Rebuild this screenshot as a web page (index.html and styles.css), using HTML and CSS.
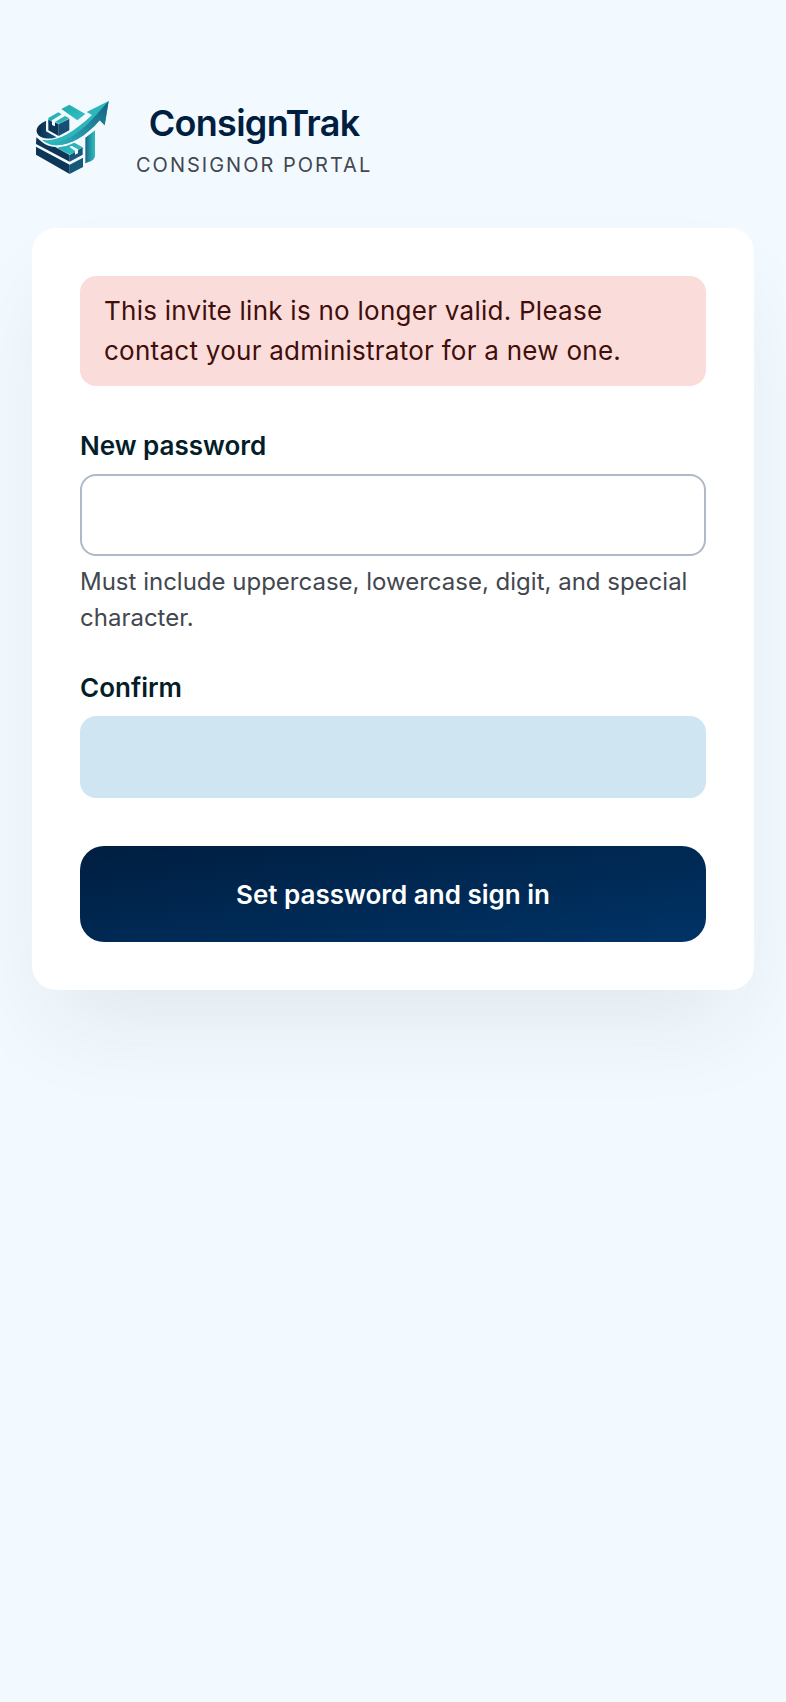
FILE: index.html
```html
<!DOCTYPE html>
<html lang="en">
<head>
    <meta charset="UTF-8">
    <meta name="viewport" content="width=device-width, initial-scale=1.0">
    <title>ConsignTrak - Consignor Portal</title>
    <link rel="stylesheet" href="styles.css">
</head>
<body>
    <main class="page">
        <header class="brand">
            <svg class="brand-logo" viewBox="24 24 240 240" aria-hidden="true">
                <defs>
                    <linearGradient id="arrow" x1="0" y1="1" x2="1" y2="0">
                        <stop offset="0" stop-color="#2cb9bd"/>
                        <stop offset="0.45" stop-color="#258fa3"/>
                        <stop offset="1" stop-color="#17617f"/>
                    </linearGradient>
                    <linearGradient id="teal" x1="0" y1="0" x2="1" y2="1">
                        <stop offset="0" stop-color="#20a6ad"/>
                        <stop offset="1" stop-color="#36c3c4"/>
                    </linearGradient>
                    <linearGradient id="side" x1="0" y1="0" x2="1" y2="0">
                        <stop offset="0" stop-color="#1a6684"/>
                        <stop offset="0.4" stop-color="#228fa2"/>
                        <stop offset="1" stop-color="#35bbbe"/>
                    </linearGradient>
                    <linearGradient id="navy" x1="0" y1="0" x2="1" y2="0">
                        <stop offset="0" stop-color="#0b2a4b"/>
                        <stop offset="1" stop-color="#17577a"/>
                    </linearGradient>
                </defs>
                <!-- back of the ring -->
                <path fill="url(#navy)" d="M66 92V124L98 142C84 147 65 147 51 141C30 129 33 106 66 92Z"/>
                <!-- small parcel -->
                <path fill="url(#teal)" d="M73 84L103 67L113 73L84 91V104L73 98Z"/>
                <path fill="url(#teal)" d="M94 95L123 78L136 85L105 102Z"/>
                <path fill="#0d3557" d="M73 90L84 96V105L93 109V97L104 103V138L73 121Z"/>
                <path fill="#174f72" d="M104 103L136 86V121L104 138Z"/>
                <!-- top panel -->
                <path fill="url(#teal)" d="M112 57L136 44L184 72L160 91Z"/>
                <!-- growth arrow -->
                <path fill="#2cb5bb" d="M53 149C95 157 142 133 204 75L188 66L254 33L242 106L227 91C178 149 117 176 75 162Q63 158 53 149Z"/>
                <path fill="url(#arrow)" d="M75 162C133 158 177 119 213 79L254 33L242 106L227 91C178 149 117 176 75 162Z"/>
                <!-- right panel -->
                <path fill="url(#side)" d="M184 143L213 121V199Q212 208 202 213L184 220Z"/>
                <!-- stacked base -->
                <path fill="#0d3557" d="M37 142L54 156Q69 169 94 171L137 195V215L36 162Z"/>
                <path fill="#17577a" d="M137 195L176 172V194L137 215Z"/>
                <path fill="#0d3557" d="M36 170L137 224V252L36 194Z"/>
                <path fill="#17577a" d="M137 224L177 203V231L137 252Z"/>
                <path fill="url(#teal)" d="M108 171Q132 168 151 158L176 172L153 187L137 194L100 174Z"/>
                <path fill="#f3faff" d="M136 171L143 167L162 178V190L153 194V182Z"/>
            </svg>
            <div class="brand-text">
                <h1 class="brand-name">ConsignTrak</h1>
                <p class="brand-sub">Consignor Portal</p>
            </div>
        </header>

        <form class="card">
            <p class="alert" role="alert">This invite link is no longer valid. Please contact your administrator for a new one.</p>

            <div class="field">
                <label for="password">New password</label>
                <input class="outlined" type="password" id="password" autocomplete="new-password" aria-describedby="password-hint">
                <p class="hint" id="password-hint">Must include uppercase, lowercase, digit, and special character.</p>
            </div>

            <div class="field">
                <label for="confirm">Confirm</label>
                <input type="password" id="confirm" autocomplete="new-password">
            </div>

            <button class="submit" type="submit">Set password and sign in</button>
        </form>
    </main>
</body>
</html>
```
FILE: styles.css
```css
* {
    margin: 0;
    padding: 0;
    box-sizing: border-box;
}

body {
    min-height: 100vh;
    background: #f3faff;
    color: #041e29;
    font-family: "Inter", sans-serif;
    font-size: 26px;
    line-height: 40px;
}

.page {
    max-width: 896px;
    margin: 0 auto;
    padding: 96px 32px;
}

.brand {
    display: flex;
    align-items: center;
    gap: 24px;
    margin-bottom: 48px;
}

.brand-logo {
    width: 80px;
    height: 80px;
}

.brand-text {
    text-align: center;
}

.brand-name {
    color: #001e40;
    font-size: 36px;
    font-weight: 600;
    line-height: 54px;
    letter-spacing: -0.02em;
}

.brand-sub {
    color: #43474f;
    font-size: 20px;
    line-height: 30px;
    letter-spacing: 0.1em;
    text-transform: uppercase;
}

.card {
    padding: 48px;
    background: #fff;
    border-radius: 24px;
    box-shadow: 0 48px 96px -16px rgba(4, 30, 41, 0.08);
}

.alert {
    margin-bottom: 40px;
    padding: 15px 24px;
    background: #faddda;
    border-radius: 16px;
    color: #410e0b;
    letter-spacing: 0.01em;
}

.field {
    display: flex;
    flex-direction: column;
    gap: 8px;
    margin-bottom: 32px;
}

.field label {
    font-weight: 600;
}

.field input {
    width: 100%;
    height: 82px;
    padding: 0 24px;
    background: #cfe6f2;
    border: 2px solid transparent;
    border-radius: 16px;
    color: inherit;
    font: inherit;
}

.field .outlined {
    background: #fff;
    border-color: #b0b9c8;
}

.hint {
    color: #43474f;
    font-size: 24px;
    line-height: 36px;
}

.submit {
    width: 100%;
    height: 96px;
    margin-top: 16px;
    background: linear-gradient(to bottom right, #001e40, #003366);
    border: none;
    border-radius: 24px;
    color: #fff;
    font-family: inherit;
    font-size: 26px;
    font-weight: 600;
    cursor: pointer;
}
```
